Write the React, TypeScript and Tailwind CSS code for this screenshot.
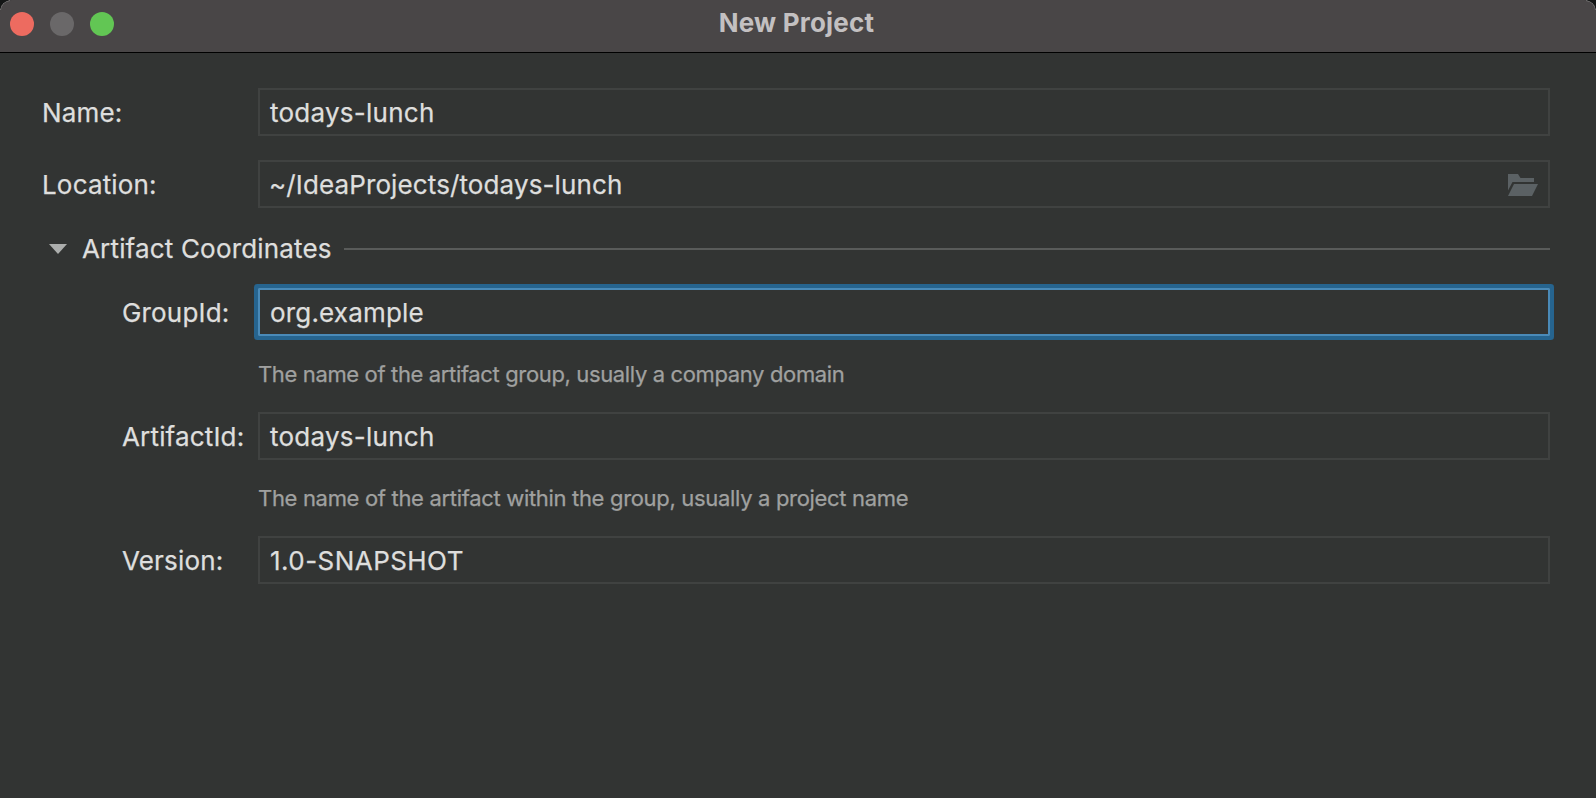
import type { ReactNode } from "react";

type FieldProps = { value: string; tracking?: string; focused?: boolean; children?: ReactNode };

function Field({ value, tracking = "tracking-[0.25px]", focused = false, children }: FieldProps) {
  return (
    <div
      className={
        focused
          ? "flex h-12 w-[1292px] items-center justify-between border-2 border-[#4a8ab8] px-[10px] shadow-[0_0_0_4px_#26648f] rounded-[1px]"
          : "flex h-12 w-[1292px] items-center justify-between border-2 border-[#404241] px-[10px]"
      }
    >
      <span className={`pt-[2px] ${tracking}`}>{value}</span>
      {children}
    </div>
  );
}

function Label({ children, nested = false }: { children: string; nested?: boolean }) {
  return <span className={nested ? "w-[136px] pt-[2px]" : "w-[216px] pt-[2px]"}>{children}</span>;
}

export default function App() {
  return (
    <div className="h-[798px] w-[1596px] overflow-hidden bg-[#141616] font-['Inter',sans-serif] text-[26px] leading-8 tracking-[0.17px] whitespace-nowrap text-[#dededd]">
      <div className="relative flex h-full flex-col overflow-hidden rounded-t-[12px] bg-[#323433]">
        <i className="absolute top-0 left-0 size-[10px] rounded-tl-[12px] border-t border-l border-[#858384] border-r-transparent border-b-transparent" />
        <i className="absolute top-0 right-0 size-[10px] rounded-tr-[12px] border-t border-r border-[#858384] border-b-transparent border-l-transparent" />
        <header className="grid h-[53px] shrink-0 grid-cols-3 border-b border-black bg-[#494647]">
          <div className="flex items-center gap-4 pb-1 pl-[10px]">
            <i className="size-6 rounded-full bg-[#ed6b60]" />
            <i className="size-6 rounded-full bg-[#6a6869]" />
            <i className="size-6 rounded-full bg-[#62c654]" />
          </div>
          <h1 className="pt-[7px] pr-[3px] text-center font-bold tracking-[0.2px] text-[#c3c0c1]">New Project</h1>
        </header>
        <main className="flex flex-col pt-[35px] [-webkit-text-stroke:0.25px]">
          <div className="flex items-center pl-[42px]">
            <Label>Name:</Label>
            <Field value="todays-lunch" />
          </div>
          <div className="mt-6 flex items-center pl-[42px]">
            <Label>Location:</Label>
            <Field value="~/IdeaProjects/todays-lunch" tracking="-ml-px tracking-[0.12px]">
              <svg width="30" height="22" viewBox="0 0 30 22" className="mt-[2px]" fill="#5b6164">
                <path d="M0 0H10L12.5 4H26V8H4.5L0 16.5Z" />
                <path d="M6 10H30L24 22H0Z" />
              </svg>
            </Field>
          </div>
          <div className="mt-6 flex h-8 items-center pt-[2px] pl-[49px]">
            <svg width="18" height="10" viewBox="0 0 18 10" fill="#acaead">
              <path d="M0 0H18L9 10Z" />
            </svg>
            <span className="ml-[15px] w-[262px]">Artifact Coordinates</span>
            <div className="h-[2px] w-[1206px] bg-[#595b5a]" />
          </div>
          <div className="mt-6 flex items-center pl-[122px]">
            <Label nested>GroupId:</Label>
            <Field value="org.example" tracking="tracking-[0.17px]" focused />
          </div>
          <p className="mt-[22px] h-8 pl-[258px] text-[22px] tracking-[-0.36px] text-[#a0a1a0]">The name of the artifact group, usually a company domain</p>
          <div className="mt-[22px] flex items-center pl-[122px]">
            <Label nested>ArtifactId:</Label>
            <Field value="todays-lunch" />
          </div>
          <p className="mt-[22px] h-8 pl-[258px] text-[22px] tracking-[-0.32px] text-[#a0a1a0]">The name of the artifact within the group, usually a project name</p>
          <div className="mt-[22px] flex items-center pl-[122px]">
            <Label nested>Version:</Label>
            <Field value="1.0-SNAPSHOT" tracking="tracking-[0.45px]" />
          </div>
        </main>
      </div>
    </div>
  );
}
